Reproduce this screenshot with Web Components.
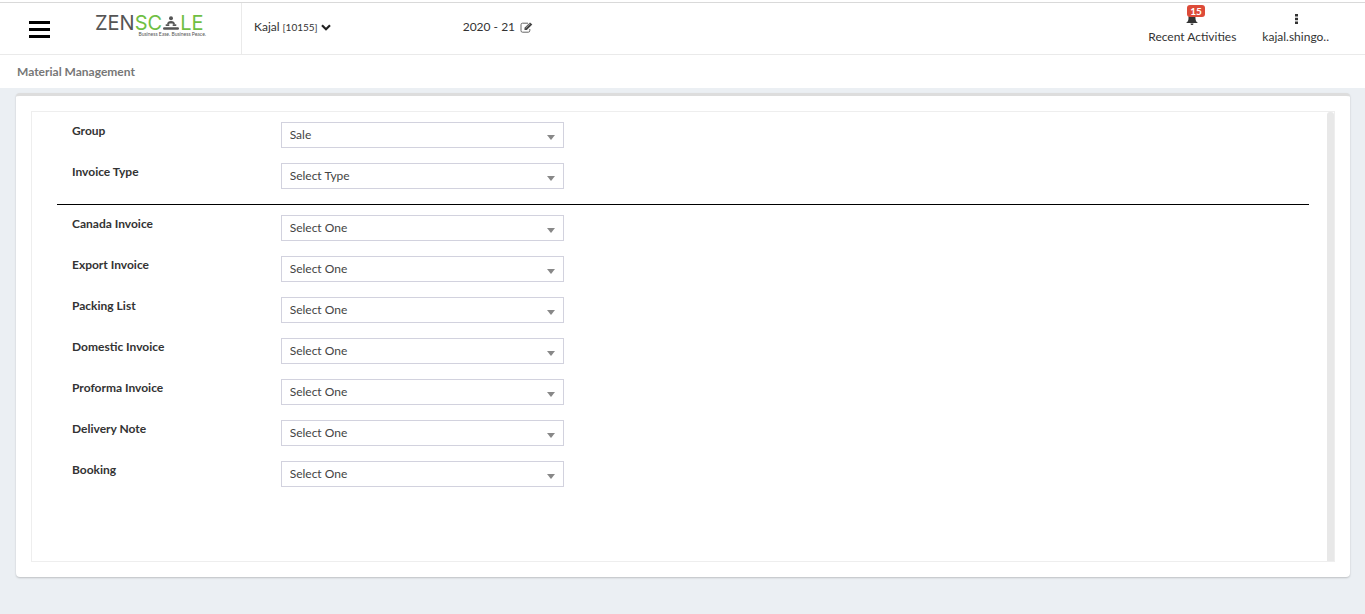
<!DOCTYPE html>
<html lang="en">
<head>
<meta charset="utf-8">
<title>Material Management</title>
<style>
body {
    margin: 0;
    background: #ebeff3;
    color: #333;
    font: 12px/18px Lato, sans-serif;
}
</style>
</head>
<body>
<app-header>
    <brand-logo slot="brand"></brand-logo>
    <company-menu name="Kajal" code="[10155]"></company-menu>
    <fiscal-year>2020 - 21</fiscal-year>
    <header-action slot="actions" icon="bell" count="15">Recent Activities</header-action>
    <header-action slot="actions" icon="dots">kajal.shingo..</header-action>
</app-header>
<page-title>Material Management</page-title>
<panel-card>
    <form-row label="Group" options="Sale,Purchase"></form-row>
    <form-row label="Invoice Type" options="Select Type"></form-row>
    <form-divider></form-divider>
    <form-row label="Canada Invoice" options="Select One"></form-row>
    <form-row label="Export Invoice" options="Select One"></form-row>
    <form-row label="Packing List" options="Select One"></form-row>
    <form-row label="Domestic Invoice" options="Select One"></form-row>
    <form-row label="Proforma Invoice" options="Select One"></form-row>
    <form-row label="Delivery Note" options="Select One"></form-row>
    <form-row label="Booking" options="Select One"></form-row>
</panel-card>

<script>
const html = (strings, ...values) => String.raw({ raw: strings }, ...values)

function define(name, render) {
    customElements.define(name, class extends HTMLElement {
        constructor() {
            super()
            const shadow = this.attachShadow({ mode: 'open' })
            const template = document.createElement('template')
            template.innerHTML = render(this)
            shadow.append(template.content.cloneNode(true))
        }
    })
}

define('app-header', () => html`
    <style>
    :host {
        display: block;
        padding-top: 2px;
        background: #fff;
    }

    header {
        display: flex;
        height: 51px;
        border-top: 1px solid #d9d9d9;
        border-bottom: 1px solid #eaeaea;
    }

    .left {
        display: flex;
        align-items: flex-start;
        gap: 45px;
        box-sizing: border-box;
        width: 242px;
        padding: 12px 0 0 29px;
        border-right: 1px solid #eaeaea;
    }

    .toggle {
        display: grid;
        gap: 4px;
        margin-top: 6px;
        padding: 0;
        border: 0;
        background: none;
        cursor: pointer;
    }

    .toggle i {
        width: 21px;
        height: 3px;
        background: #000;
    }

    .middle {
        display: flex;
        align-items: flex-start;
        gap: 132px;
        padding: 15px 0 0 12px;
    }

    .right {
        display: flex;
        gap: 26px;
        margin-left: auto;
        padding-right: 36px;
    }
    </style>
    <header>
        <div class="left">
            <button class="toggle" aria-label="Toggle menu"><i></i><i></i><i></i></button>
            <slot name="brand"></slot>
        </div>
        <div class="middle"><slot></slot></div>
        <nav class="right"><slot name="actions"></slot></nav>
    </header>
`)

define('brand-logo', () => html`
    <style>
    :host {
        display: block;
        width: 111px;
        color: #555;
    }

    .name {
        display: flex;
        align-items: center;
        font: 20px/17px Inter, sans-serif;
    }

    .green {
        color: #6fbf44;
    }

    svg {
        width: 16px;
        height: 14px;
        margin: 0 1px 2px;
    }

    .tagline {
        font-size: 5px;
        line-height: 5px;
        text-align: right;
        white-space: nowrap;
    }
    </style>
    <div class="name">
        <span>ZEN</span><span class="green">SC</span>
        <svg viewBox="0 0 16 14" fill="#555" aria-hidden="true">
            <circle cx="8" cy="2.200" r="2"/>
            <path d="M4 8.200Q4.500 5 8 5t4 3.200l-1.500.3L9.500 7.500h-3L5.500 8.500z"/>
            <rect x="2.500" y="8.200" width="4" height="1.800" rx=".9"/>
            <rect x="9.500" y="8.200" width="4" height="1.800" rx=".9"/>
            <rect x="0" y="11.300" width="16" height="2.500" rx="1.200"/>
        </svg>
        <span class="green">LE</span>
    </div>
    <div class="tagline">Business Ease. Business Peace.</div>
`)

define('company-menu', el => html`
    <style>
    :host {
        display: block;
    }

    button {
        display: flex;
        align-items: center;
        gap: 3px;
        padding: 0;
        border: 0;
        background: none;
        color: inherit;
        font: inherit;
        cursor: pointer;
    }

    .code {
        font-size: 10px;
    }
    </style>
    <button>
        <span>${el.getAttribute('name')}</span>
        <span class="code">${el.getAttribute('code')}</span>
        <svg width="10" height="7" viewBox="0 0 10 7" aria-hidden="true">
            <path d="M1 1.300l4 4 4-4" fill="none" stroke="#222" stroke-width="2.200"/>
        </svg>
    </button>
`)

define('fiscal-year', () => html`
    <style>
    :host {
        display: flex;
        align-items: center;
        gap: 5px;
    }

    button {
        display: flex;
        padding: 0;
        border: 0;
        background: none;
        cursor: pointer;
    }
    </style>
    <span><slot></slot></span>
    <button aria-label="Change year">
        <svg width="13" height="11" viewBox="0 0 13 11" fill="none">
            <path d="M8 1.200H2.500Q1 1.200 1 2.700v6Q1 10.200 2.500 10.200h5.800q1.500 0 1.500-1.500V7" stroke="#666"/>
            <path d="M4.500 8V5.800L10 .4l2.300 2.200L6.800 8z" fill="#444"/>
            <path d="M5.700 6L10 1.800" stroke="#ccc" stroke-width=".7"/>
        </svg>
    </button>
`)

const icons = {
    bell: '<path d="M7 1c3 0 3.500 2 3.500 4.500S11.500 9 13 10H1c1.500-1 2.500-2 2.500-4.500S4 1 7 1zM5.500 10.500h3a1.500 1.500 0 0 1-3 0z"/>',
    dots: '<path d="M6 1h3v2.500H6zM6 4.800h3v2.500H6zM6 8.600h3v2.500H6z"/>',
}

define('header-action', el => html`
    <style>
    :host {
        display: block;
    }

    a {
        display: flex;
        flex-direction: column;
        align-items: center;
        position: relative;
        padding-top: 10px;
        color: #333;
        text-decoration: none;
    }

    svg {
        margin-bottom: 3px;
    }

    .badge {
        position: absolute;
        top: 2px;
        left: calc(50% - 5px);
        padding: 0 3px;
        border-radius: 3px;
        background: #dd4b39;
        color: #fff;
        font-weight: 700;
        font-size: 10px;
        line-height: 12px;
    }
    </style>
    <a href="#">
        <svg width="14" height="12" viewBox="0 0 14 12" fill="#333" aria-hidden="true">${icons[el.getAttribute('icon')]}</svg>
        ${el.hasAttribute('count') ? html`<span class="badge">${el.getAttribute('count')}</span>` : ''}
        <span><slot></slot></span>
    </a>
`)

define('page-title', () => html`
    <style>
    :host {
        display: block;
        padding: 0 17px;
        background: #fff;
    }

    h1 {
        margin: 0;
        color: #777;
        font-weight: 700;
        font-size: 12px;
        line-height: 33px;
    }
    </style>
    <h1><slot></slot></h1>
`)

define('panel-card', () => html`
    <style>
    :host {
        display: block;
        margin: 5px 15px 36px 16px;
        padding: 15px;
        border-top: 3px solid #ddd;
        border-radius: 4px;
        background: #fff;
        box-shadow: 0 1px 2px rgba(0, 0, 0, 0.2);
    }

    .scroller {
        display: flex;
        border: 1px solid #eee;
    }

    form {
        flex: 1;
        padding: 10px 18px 59px 25px;
    }

    .track {
        width: 7px;
        border-radius: 3px 3px 0 0;
        background: #e8e8e8;
    }
    </style>
    <div class="scroller">
        <form><slot></slot></form>
        <div class="track"></div>
    </div>
`)

define('form-row', el => html`
    <style>
    :host {
        display: grid;
        grid-template-columns: 2fr 3fr 7fr;
        margin-bottom: 15px;
    }

    label {
        padding-left: 15px;
        font-weight: 700;
    }

    .field {
        position: relative;
        margin: 0 15px;
    }

    .field::after {
        content: "";
        position: absolute;
        top: 13px;
        right: 9px;
        border: 4px solid transparent;
        border-top: 5px solid #888;
        border-bottom: 0;
        pointer-events: none;
    }

    select {
        display: block;
        appearance: none;
        box-sizing: border-box;
        width: 100%;
        height: 26px;
        padding: 0 20px 0 8px;
        border: 1px solid #d2d2de;
        border-radius: 0;
        background: #fff;
        color: #444;
        font: inherit;
    }
    </style>
    <label for="field">${el.getAttribute('label')}</label>
    <div class="field">
        <select id="field">
            ${el.getAttribute('options').split(',').map(option => html`<option>${option}</option>`).join('')}
        </select>
    </div>
`)

define('form-divider', () => html`
    <style>
    :host {
        display: block;
        margin-bottom: 10px;
        border-top: 1px solid #000;
    }
    </style>
`)
</script>
</body>
</html>
